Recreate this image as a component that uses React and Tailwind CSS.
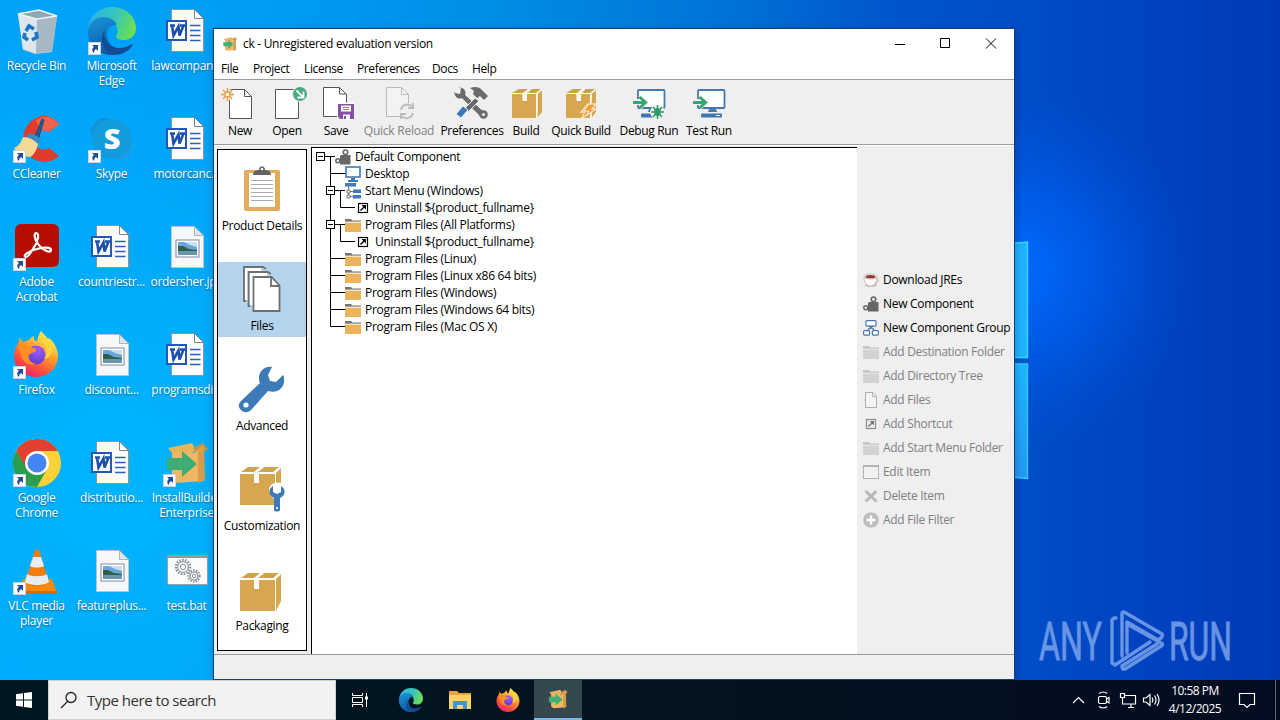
import React from 'react';

/* ---------- shared icons ---------- */

const Shortcut = () => (
  <svg className="absolute left-0 bottom-0" width="13" height="13" viewBox="0 0 13 13">
    <rect x="0.5" y="0.5" width="12" height="12" fill="#fff" stroke="#c9d6e2" />
    <path d="M4 3h6v6L8 7c-1.4 1-2 2-2 4C3.600 9 3.800 6.500 6 5z" fill="#1f4f9c" />
  </svg>
);

const EdgeIcon = ({ size = 48 }) => (
  <svg width={size} height={size} viewBox="0 0 48 48">
    <defs>
      <linearGradient id="edgeTop" x1="0" y1="0.3" x2="1" y2="0.6">
        <stop offset="0" stopColor="#2cb6e4" />
        <stop offset="0.5" stopColor="#35c6bd" />
        <stop offset="1" stopColor="#6fe04b" />
      </linearGradient>
      <linearGradient id="edgeMid" x1="0" y1="0" x2="0.4" y2="1">
        <stop offset="0" stopColor="#1b95dc" />
        <stop offset="1" stopColor="#0c59a4" />
      </linearGradient>
    </defs>
    <path d="M0 23C1 9 11 0 24 0c14 0 24 10 24 21 0 8-6 12-12 12-5 0-9-2-8-4 3-3 2-11-5-15C14 9 4 14 0 23z" fill="url(#edgeTop)" />
    <path d="M0 24c1-9 8-14 15-14 7 0 12 3 14 8-6-1-11 4-10 11 1 9 9 15 17 14-4 3-8 5-13 5C10 48-1 37 0 24z" fill="url(#edgeMid)" />
    <path d="M17 23c-3 10 5 18 15 18 6 0 10-3 12-4 1 0 1 1 0 2-4 6-11 9-19 9-9-3-15-15-8-25z" fill="#124c94" />
  </svg>
);

const FirefoxIcon = ({ size = 46 }) => (
  <svg width={size} height={size} viewBox="0 0 46 46">
    <defs>
      <linearGradient id="ffBody" x1="0.8" y1="0.1" x2="0.3" y2="1">
        <stop offset="0" stopColor="#fff44f" />
        <stop offset="0.4" stopColor="#ff9a2a" />
        <stop offset="0.75" stopColor="#ff4a3e" />
        <stop offset="1" stopColor="#e3237e" />
      </linearGradient>
      <radialGradient id="ffCore" cx="0.6" cy="0.2" r="0.9">
        <stop offset="0" stopColor="#a15cff" />
        <stop offset="1" stopColor="#5a3ac4" />
      </radialGradient>
    </defs>
    <path d="M28 0c2 3 5 5 7 8l1-1c5 4 9 11 9 18 0 12-10 21-22 21S1 37 1 25c0-5 2-10 5-14V7c2 1 3 3 4 4l6-2c2-3 5-4 5-4-1 3 1 5 3 5 1-4 2-7 4-10z" fill="url(#ffBody)" />
    <circle cx="23" cy="24" r="9.500" fill="url(#ffCore)" />
    <path d="M6 11c3 3 8 3 11 5 4 1 7 2 6 4-2 2-5 1-7 4-2 4 2 8 7 9-8 2-15-3-15-10-2-4-3-8-2-12z" fill="#ff8f22" />
    <path d="M28 1c-2 6 1 10 4 14 3 5 1 10-1 13 6-1 8-5 8-9 0-7-9-11-11-18z" fill="#ffd43a" />
  </svg>
);

const BoxArrowIcon = ({ size = 48 }) => (
  <svg width={size} height={size} viewBox="0 0 48 48">
    <path d="M5 9l24-5 4 7-5 4H10z" fill="#e8b45c" />
    <path d="M30 9l10-5 5 6-9 6z" fill="#cc9442" />
    <path d="M9 13l22 1 9-7 1 35-27 2-5-4z" fill="#efb765" />
    <path d="M35 12l6-5 1 34-7 3z" fill="#d79c48" />
    <path d="M4 19h15v-7l15 13-15 13v-7H4z" fill="#3fae74" />
  </svg>
);

/* ---------- desktop icons ---------- */

const RecycleIcon = () => (
  <svg width="48" height="48" viewBox="0 0 48 48">
    <path d="M6 7l21-4 18 6-5 36-17 2-12-4z" fill="#b9cdd8" transform="translate(-1 0)" />
    <path d="M5 7l20 5-2 34-13-4z" fill="#dde7ec" />
    <path d="M24 12l20-3-5 35-16 2z" fill="#a6b8c2" />
    <path d="M5 7l21-4 18 6-20 3z" fill="#8fa6b4" stroke="#eef5f8" strokeWidth="1.500" />
    <g fill="none" stroke="#1976c4" strokeWidth="3.600">
      <path d="M13 24l3-5 5 3" />
      <path d="M23 25l1 5-5 3" />
      <path d="M15 33l-4-3 1-4" />
    </g>
  </svg>
);

const WordIcon = () => (
  <svg width="48" height="48" viewBox="0 0 48 48">
    <path d="M8.500 2.500h23l9 9v33h-32z" fill="#fbfbfb" stroke="#8b939b" />
    <path d="M31.500 2.500v9h9z" fill="#fff" stroke="#7d858c" />
    <path d="M27 18.500h10.500M27 23.500h10.500M27 28.500h10.500M27 33.500h10.500" stroke="#2b62b8" strokeWidth="1.300" />
    <rect x="4" y="14" width="19" height="19" fill="#fff" stroke="#2458b4" strokeWidth="2" />
    <path d="M7 18.500h5M17 18.500h5M9 18.500l1.500 10 5-9 1 9 4-10" stroke="#1d50ad" strokeWidth="2.600" fill="none" />
  </svg>
);

const PictureIcon = () => (
  <svg width="48" height="48" viewBox="0 0 48 48">
    <path d="M8.500 3.500h23l9 9v32h-32z" fill="#f6f7f8" stroke="#b9c4cc" />
    <path d="M31.500 3.500v9h9z" fill="#dfe7ec" stroke="#a9b5be" />
    <rect x="13" y="17" width="23" height="17" fill="#fff" stroke="#7d8a99" />
    <rect x="15" y="19" width="19" height="13" fill="#6aa5dc" />
    <path d="M21 19h13v5l-7-2z" fill="#c8e0f2" />
    <path d="M15 23l5 0 6 3 8 1v1.500H15z" fill="#315f4b" />
    <path d="M15 28h19v4H15z" fill="#6b95ad" />
  </svg>
);

const CCleanerIcon = () => (
  <svg width="48" height="48" viewBox="0 0 48 48">
    <path d="M46 9l-10 8c-7-4-14 0-14 8s7 12 14 8l10 8c-9 9-25 7-32-3C5 24 12 4 29 1c7-1 13 3 17 8z" fill="#df3d2c" />
    <path d="M46 9l-10 8c-3-2-6-2-9-1l-4-11c9-6 18-3 23 4z" fill="#f0624a" />
    <path d="M29 4l2 1-6 20-4-1z" fill="#1f5f97" stroke="#174a78" />
    <path d="M15 19c6-1 10 2 13 7l-5 4c-4-3-8-4-12-5z" fill="#3a8ac4" />
    <path d="M10 22c6 0 11 3 15 7-1 6-5 12-8 13-6 0-13-4-16-9 5-2 7-6 9-11z" fill="#f5d893" />
  </svg>
);

const SkypeIcon = () => (
  <svg width="48" height="48" viewBox="0 0 48 48">
    <circle cx="17" cy="17" r="14" fill="#1590d8" />
    <circle cx="32" cy="32" r="13" fill="#1a9fe6" />
    <circle cx="24" cy="24" r="20" fill="#139cdd" />
    <text x="24" y="34" textAnchor="middle" fontFamily="Open Sans" fontWeight="800" fontSize="29" fill="#fff">S</text>
  </svg>
);

const AcrobatIcon = () => (
  <svg width="48" height="48" viewBox="0 0 48 48">
    <rect x="2" y="1" width="44" height="43" rx="6" fill="#b60c04" />
    <path d="M13 34c-4-1 2-6 11-8 7-2 14-2 14 1 0 4-9 0-13-6-4-5-4-11-2-11 4 0 2 9-3 16-3 5-6 8-7 8z" fill="none" stroke="#fff" strokeWidth="2.200" />
  </svg>
);

const ChromeIcon = () => (
  <svg width="48" height="48" viewBox="0 0 48 48">
    <circle cx="24" cy="24" r="24" fill="#fdd13a" />
    <path d="M3.200 12A24 24 0 0 1 44.800 12H24L13 30z" fill="#e4402f" />
    <path d="M3.200 12A24 24 0 0 0 24 48l10-18H14z" fill="#2c9e4b" />
    <circle cx="24" cy="24" r="12" fill="#fff" />
    <circle cx="24" cy="24" r="9.500" fill="#4285f4" />
  </svg>
);

const VlcIcon = () => (
  <svg width="48" height="48" viewBox="0 0 48 48">
    <path d="M10 32h29l5 14H6z" fill="#f58a10" />
    <path d="M6 44h38v3H6z" fill="#d96b06" />
    <path d="M22 3c1-1 3-1 4 0l10 33c-3 5-21 5-24 0z" fill="#f57c0c" />
    <path d="M20 10h8l3 9c-3 2-11 2-14 0z" fill="#e9edf0" />
    <path d="M14 27c4 3 16 3 20 0l2 8c-4 4-20 4-24 0z" fill="#e9edf0" />
  </svg>
);

const BatIcon = () => (
  <svg width="48" height="48" viewBox="0 0 48 48">
    <rect x="4.500" y="8.500" width="40" height="29" fill="#fafbfb" stroke="#8fa3b0" />
    <rect x="4" y="8" width="41" height="3" fill="#8f9ba4" />
    <g fill="none" stroke="#8c9298">
      <circle cx="20" cy="20" r="7" strokeWidth="2.500" strokeDasharray="1.600 1.300" />
      <circle cx="20" cy="20" r="5.300" />
      <circle cx="20" cy="20" r="2.700" />
      <circle cx="31" cy="29" r="5.500" strokeWidth="2.300" strokeDasharray="1.500 1.200" />
      <circle cx="31" cy="29" r="4" />
      <circle cx="31" cy="29" r="1.800" />
    </g>
  </svg>
);

const desktopItems = [
  { icon: RecycleIcon, lines: ['Recycle Bin'] },
  { icon: CCleanerIcon, lines: ['CCleaner'], shortcut: true },
  { icon: AcrobatIcon, lines: ['Adobe', 'Acrobat'], shortcut: true },
  { icon: FirefoxIcon, lines: ['Firefox'], shortcut: true },
  { icon: ChromeIcon, lines: ['Google', 'Chrome'], shortcut: true },
  { icon: VlcIcon, lines: ['VLC media', 'player'], shortcut: true },
  { icon: EdgeIcon, lines: ['Microsoft', 'Edge'], shortcut: true },
  { icon: SkypeIcon, lines: ['Skype'], shortcut: true },
  { icon: WordIcon, lines: ['countriestr...'] },
  { icon: PictureIcon, lines: ['discount...'] },
  { icon: WordIcon, lines: ['distributio...'] },
  { icon: PictureIcon, lines: ['featureplus...'] },
  { icon: WordIcon, lines: ['lawcompan...'] },
  { icon: WordIcon, lines: ['motorcanc...'] },
  { icon: PictureIcon, lines: ['ordersher.jpg'] },
  { icon: WordIcon, lines: ['programsdi...'] },
  { icon: BoxArrowIcon, lines: ['InstallBuilder', 'Enterprise'], shortcut: true },
  { icon: BatIcon, lines: ['test.bat'] },
];

const DesktopItem = ({ icon: Icon, lines, shortcut }) => (
  <div className="flex flex-col items-center pt-[7px]">
    <div className="relative w-12 h-12">
      <Icon />
      {shortcut && <Shortcut />}
    </div>
    <div className="mt-[3px] text-center text-[12px] leading-[15px] tracking-[-0.3px] text-white whitespace-nowrap [text-shadow:0_1px_2px_rgba(0,0,0,0.45)]">
      {lines.map((line) => (
        <div key={line}>{line}</div>
      ))}
    </div>
  </div>
);

/* ---------- toolbar icons ---------- */

const ToolSvg = ({ children }) => (
  <svg width="48" height="36" viewBox="0 0 48 36" fill="none">{children}</svg>
);

const NewIcon = () => (
  <ToolSvg>
    <path d="M13.500 4.500h15l7 7v22h-22z" fill="#fff" stroke="#555" />
    <path d="M28.500 4.500v7h7" stroke="#555" />
    <circle cx="11.500" cy="9.500" r="6" fill="#efefef" />
    <path d="M11.500 3v13M5 9.500h13M7 5l9 9M16 5l-9 9" stroke="#ee9c42" strokeWidth="1.400" />
    <circle cx="11.500" cy="9.500" r="2.500" fill="#fff" stroke="#ee9c42" strokeWidth="1.300" />
  </ToolSvg>
);

const OpenIcon = () => (
  <ToolSvg>
    <path d="M12.500 4.500h23v29h-23z" fill="#fff" stroke="#555" />
    <circle cx="37" cy="9" r="8" fill="#efefef" />
    <circle cx="37" cy="9" r="7" fill="#46ab7d" />
    <path d="M33.500 5.500l6 6M40.500 6.500v6h-6" stroke="#fff" strokeWidth="1.800" />
  </ToolSvg>
);

const SaveIcon = () => (
  <ToolSvg>
    <path d="M11.500 2.500h16l7 7v22h-23z" fill="#fff" stroke="#555" />
    <path d="M27.500 2.500v6.500h7" stroke="#555" />
    <path d="M25 17.500h17v17H25z" fill="#fff" />
    <path d="M26 19h16v15H28l-2-2z" fill="#8650a6" />
    <path d="M29 20.500h10v6H29zM31 29.500h7V34h-7z" fill="#fff" />
    <path d="M31 22.500h6M31 24.500h6" stroke="#8650a6" strokeWidth="0.800" />
    <path d="M32 31h2v3h-2z" fill="#8650a6" />
  </ToolSvg>
);

const ReloadIcon = () => (
  <ToolSvg>
    <path d="M11.500 2.500h15l7 7v22h-22z" fill="#f3f3f3" stroke="#b9b9b9" />
    <path d="M26.500 2.500v7h7" stroke="#b9b9b9" />
    <circle cx="32" cy="26" r="8" fill="#efefef" />
    <path d="M26 25c1-6 8-7 11-3M38 18v5h-5M38 28c-1 5-8 7-11 3M26 34v-5h5" stroke="#bcbcbc" strokeWidth="2" />
  </ToolSvg>
);

const PrefsIcon = () => (
  <ToolSvg>
    <path d="M8 7l3-3 4 2 1 3 22 20-4 4-21-21-3 0z" fill="#6b6b6b" />
    <circle cx="12" cy="8" r="5.500" fill="#6b6b6b" />
    <path d="M7 2l6 1-1 6-5-1z" fill="#efefef" />
    <circle cx="35.500" cy="29.500" r="4.300" fill="#6b6b6b" />
    <circle cx="35.500" cy="29.500" r="1.600" fill="#efefef" />
    <path d="M27 13l4 3-11 11-4-3z" fill="#6b6b6b" stroke="#efefef" />
    <path d="M22 3c5-2 9-1 11 1l7 7-4 4-4-4-3 2-4-4 1-3z" fill="#6b6b6b" />
    <path d="M15 21l5 4-7 8-5-4z" fill="#3d78b8" stroke="#efefef" />
  </ToolSvg>
);

const Box = () => (
  <g>
    <path d="M10 9h24v24H10z" fill="#d6a74e" />
    <path d="M10 8l7-4h9l-5 4zM25 8l4-4h10l-5 4z" fill="#caa347" />
    <path d="M35.500 9l4.500-4v22l-4.500 6z" fill="#d6a74e" />
    <path d="M20.500 8h4.500v8h-4.500z" fill="#fff" />
    <path d="M21 8.500l6-4.500M25 8.500l4-4.500M10 8.500h25M35 9v24M35 8.500l5-4" stroke="#fff" fill="none" />
  </g>
);

const BuildIcon = () => (
  <ToolSvg>
    <Box />
  </ToolSvg>
);

const QuickBuildIcon = () => (
  <ToolSvg>
    <g transform="translate(-1 0)">
      <Box />
      <path d="M32 19l8 0-4 5h4L25 34l4-7h-4z" fill="#f29a3c" stroke="#f5e3c4" strokeWidth="1.300" />
      <path d="M32 20l-4 6h5l-3 5" stroke="#fff" strokeWidth="0.800" />
    </g>
  </ToolSvg>
);

const RunBase = () => (
  <g>
    <rect x="13" y="5" width="26.500" height="18" rx="1" fill="#fff" stroke="#4a78ae" strokeWidth="1.800" />
    <path d="M24 24h7l1 3h-9z" fill="#4a78ae" />
    <rect x="16" y="28.500" width="21" height="4" rx="1" fill="#3f74b3" />
    <path d="M31 30.500h4" stroke="#fff" />
    <path d="M6 14h9v-4l9 7.500-9 7.500v-5H6z" fill="#efefef" />
    <path d="M14 12v-1l6 6-3 6h-3z" fill="#fff" />
    <path d="M8 17.500h11M14.500 12l6 5.500-6 5.500" stroke="#3aa573" strokeWidth="3" />
  </g>
);

const DebugIcon = () => (
  <ToolSvg>
    <RunBase />
    <ellipse cx="32.500" cy="27" rx="7.500" ry="7" fill="#efefef" />
    <path d="M26 27h13M28 22l9 10M37 22l-9 10M32.500 20v14" stroke="#2f9a67" strokeWidth="1.500" />
    <ellipse cx="32.500" cy="27" rx="3.300" ry="4" fill="#2f9a67" />
  </ToolSvg>
);

const TestIcon = () => (
  <ToolSvg>
    <RunBase />
  </ToolSvg>
);

const tools = [
  { label: 'New', icon: NewIcon, width: 'w-[46px]' },
  { label: 'Open', icon: OpenIcon, width: 'w-[48px]' },
  { label: 'Save', icon: SaveIcon, width: 'w-[50px]' },
  { label: 'Quick Reload', icon: ReloadIcon, width: 'w-[76px]', disabled: true },
  { label: 'Preferences', icon: PrefsIcon, width: 'w-[70px]' },
  { label: 'Build', icon: BuildIcon, width: 'w-[38px]' },
  { label: 'Quick Build', icon: QuickBuildIcon, width: 'w-[72px]' },
  { label: 'Debug Run', icon: DebugIcon, width: 'w-[64px]' },
  { label: 'Test Run', icon: TestIcon, width: 'w-[56px]' },
];

/* ---------- sidebar icons ---------- */

const ClipboardIcon = () => (
  <svg width="48" height="48" viewBox="0 0 48 48">
    <rect x="6" y="5" width="36" height="41" rx="2" fill="#e2ac5a" />
    <path d="M11 8h26v34H11z" fill="#fff" />
    <path d="M13 15.500h22M13 19.500h22M13 23.500h22M13 27.500h22M13 31.500h22M13 35.500h22" stroke="#a9a9b4" />
    <path d="M15 10c0-4 3-5 6-5 0-5 6-5 6 0 3 0 6 1 6 5z" fill="#636363" />
    <circle cx="24" cy="4" r="1.300" fill="#fff" />
  </svg>
);

const FilesIcon = () => (
  <svg width="48" height="48" viewBox="0 0 48 48" fill="none" stroke="#6f6f6f" strokeWidth="1.800">
    <path d="M7 3h16v3H10v29H7zM12 8h17v3H15v29h-3z" fill="#fff" stroke="none" />
    <path d="M8 36H6V2h19l3 2M12 41h-1.500V7H30l3 2" />
    <path d="M15.500 12h18l8 8.500V46h-26z" fill="#fff" />
    <path d="M33 12v9h8.500" />
  </svg>
);

const WrenchIcon = () => (
  <svg width="48" height="48" viewBox="0 0 48 48">
    <path d="M34 2c-7-1-13 4-13 11 0 2 0 3 1 5L3 36c-3 3-3 6 0 9 3 3 7 3 10 0l17-19c9 3 17-3 16-12 0-2 0-3-1-4l-7 7-6-1-2-6z" fill="#3d7ab8" />
    <circle cx="8" cy="40" r="2.600" fill="#fff" />
  </svg>
);

const BigBox = () => (
  <g>
    <path d="M3 9h35v31H3z" fill="#d6a74e" />
    <path d="M4 7l7-5h12l-6 5zM20 7l7-5h15l-6 5z" fill="#cfa34c" />
    <path d="M39 8l5-5v27l-5 10z" fill="#d6a74e" />
    <path d="M17 7h5v11h-5z" fill="#fff" />
    <path d="M18 8l8-6" stroke="#fff" strokeWidth="2" />
  </g>
);

const CustomizeIcon = () => (
  <svg width="48" height="48" viewBox="0 0 48 48">
    <g transform="translate(-1 0)">
      <BigBox />
      <path d="M32 24a8.500 8.500 0 1 1 13 9v14h-8V34c-3-2-5-6-5-10z" fill="#fff" />
      <path d="M37 21c-5 3-5 9 1 12v12c0 2 6 2 6 0V33c6-3 6-9 1-12v6l-4 2-4-2z" transform="translate(-1 0)" fill="#3d7ab8" />
      <circle cx="40" cy="43" r="1.100" fill="#fff" />
    </g>
  </svg>
);

const PackageIcon = () => (
  <svg width="48" height="48" viewBox="0 0 48 48">
    <g transform="translate(-1 6)">
      <BigBox />
    </g>
  </svg>
);

const sections = [
  { label: 'Product Details', icon: ClipboardIcon },
  { label: 'Files', icon: FilesIcon, selected: true },
  { label: 'Advanced', icon: WrenchIcon },
  { label: 'Customization', icon: CustomizeIcon },
  { label: 'Packaging', icon: PackageIcon },
];

/* ---------- 16px icons for the tree and the action list ---------- */

const Small = ({ children }) => (
  <svg className="shrink-0" width="16" height="16" viewBox="0 0 16 16" fill="none">{children}</svg>
);

const ComponentIcon = () => (
  <Small>
    <path d="M6 6h9.500v9.500H5V7z" fill="#666" />
    <circle cx="10.500" cy="3.300" r="2.300" stroke="#666" strokeWidth="1.600" />
    <circle cx="2.800" cy="11.800" r="2" fill="#efefef" stroke="#666" strokeWidth="1.500" />
  </Small>
);

const MonitorIcon = () => (
  <Small>
    <rect x="1" y="1" width="14" height="10" fill="#fff" stroke="#3d7ab8" strokeWidth="1.600" />
    <path d="M6 12h4v2H6zM3 14h10v2H3z" fill="#3d7ab8" />
  </Small>
);

const StartMenuIcon = () => (
  <Small>
    <path d="M0 0h11v3.500H0zM8 6.500h8V10H8zM8 12h8v3.500H8z" fill="#3d7ab8" />
    <path d="M3.500 3v10M4 8.500h4M4 13.500h4" stroke="#777" />
    <path d="M2 7h3v3H2zM2 12h3v3H2z" fill="#fff" stroke="#777" />
  </Small>
);

const FolderIcon = ({ disabled }) => (
  <Small>
    <path d="M0 2h6l1.500 1.500H16V5H0z" fill={disabled ? '#c2c2c2' : '#757575'} />
    <path d="M0 5.500h16V15H0z" fill={disabled ? '#d2d2d2' : '#ebb45c'} />
    <path d="M0 5h16" stroke={disabled ? '#e4e4e4' : '#fff4dc'} strokeWidth="0.800" />
  </Small>
);

const LinkIcon = ({ disabled }) => (
  <Small>
    <rect x="3.500" y="3.500" width="9" height="9" fill={disabled ? '#efefef' : '#fff'} stroke={disabled ? '#8a8a8a' : '#000'} strokeWidth="1.200" />
    <path d="M5.500 10.500l4-4" stroke={disabled ? '#777' : '#000'} strokeWidth="1.400" />
    <path d="M6.500 5H11v4.500z" fill={disabled ? '#777' : '#000'} />
  </Small>
);

const CoffeeIcon = () => (
  <Small>
    <ellipse cx="8" cy="13" rx="6" ry="1.800" fill="#ccb9b0" />
    <path d="M1 5c0 6 3 9 6.500 9S14 11 14 5z" fill="#fbf9f7" stroke="#b9aaa2" strokeWidth="0.700" />
    <path d="M13 7c3-1 3 4-1 4" stroke="#b9aaa2" />
    <ellipse cx="7.500" cy="4.500" rx="6.500" ry="2.500" fill="#fff" stroke="#b9aaa2" strokeWidth="0.700" />
    <ellipse cx="7.500" cy="4.700" rx="5" ry="1.600" fill="#8d3a2c" />
  </Small>
);

const GroupIcon = () => (
  <Small>
    <rect x="3" y="0.700" width="10" height="5.500" rx="1" fill="#fff" stroke="#4a78ae" strokeWidth="1.200" />
    <path d="M8 6v2M4 10.500L8 8l4 2.500M6 6l5 3M10 6L5 9" stroke="#4a78ae" />
    <rect x="0.600" y="10.600" width="6" height="4.500" rx="1" fill="#fff" stroke="#4a78ae" strokeWidth="1.200" />
    <rect x="9.400" y="10.600" width="6" height="4.500" rx="1" fill="#fff" stroke="#4a78ae" strokeWidth="1.200" />
  </Small>
);

const PageIcon = () => (
  <Small>
    <path d="M2.500 0.500h7.500l3.500 3.500v11.500h-11z" fill="#f4f4f4" stroke="#b0b0b0" />
    <path d="M9.500 0.500v4h4" stroke="#b0b0b0" />
  </Small>
);

const EditIcon = () => (
  <Small>
    <rect x="0.500" y="1.500" width="15" height="13" fill="#f1f1f1" stroke="#b3b3b3" />
    <path d="M0 2h16" stroke="#b3b3b3" strokeWidth="2" />
  </Small>
);

const DeleteIcon = () => (
  <Small>
    <path d="M2.500 3l11 10.500M13.500 3l-11 10.500" stroke="#b9b9b9" strokeWidth="3" />
  </Small>
);

const AddIcon = () => (
  <Small>
    <circle cx="8" cy="8" r="7.800" fill="#bdbdbd" />
    <path d="M8 3.500v9M3.500 8h9" stroke="#fff" strokeWidth="2.400" />
  </Small>
);

const actions = [
  { label: 'Download JREs', icon: CoffeeIcon },
  { label: 'New Component', icon: ComponentIcon },
  { label: 'New Component Group', icon: GroupIcon },
  { label: 'Add Destination Folder', icon: FolderIcon, disabled: true },
  { label: 'Add Directory Tree', icon: FolderIcon, disabled: true },
  { label: 'Add Files', icon: PageIcon, disabled: true },
  { label: 'Add Shortcut', icon: LinkIcon, disabled: true },
  { label: 'Add Start Menu Folder', icon: FolderIcon, disabled: true },
  { label: 'Edit Item', icon: EditIcon, disabled: true },
  { label: 'Delete Item', icon: DeleteIcon, disabled: true },
  { label: 'Add File Filter', icon: AddIcon, disabled: true },
];

/* ---------- file tree ---------- */

const tree = [
  { label: 'Default Component', level: 0, open: true, icon: ComponentIcon },
  { label: 'Desktop', level: 1, icon: MonitorIcon },
  { label: 'Start Menu (Windows)', level: 1, open: true, icon: StartMenuIcon },
  { label: 'Uninstall ${product_fullname}', level: 2, icon: LinkIcon },
  { label: 'Program Files (All Platforms)', level: 1, open: true, icon: FolderIcon },
  { label: 'Uninstall ${product_fullname}', level: 2, icon: LinkIcon },
  { label: 'Program Files (Linux)', level: 1, icon: FolderIcon },
  { label: 'Program Files (Linux x86 64 bits)', level: 1, icon: FolderIcon },
  { label: 'Program Files (Windows)', level: 1, icon: FolderIcon },
  { label: 'Program Files (Windows 64 bits)', level: 1, icon: FolderIcon },
  { label: 'Program Files (Mac OS X)', level: 1, icon: FolderIcon, last: true },
];

const branchWidth = [23, 33, 43];

const Branch = ({ level, open, last }) => (
  <svg className="shrink-0" width={branchWidth[level]} height="17" viewBox={`0 0 ${branchWidth[level]} 17`} fill="none" stroke="#000">
    {level === 0 && <path d="M8 8.500h16M18.500 8.500V17" />}
    {level === 1 && <path d={last ? 'M18.500 0v8.500H33' : 'M18.500 0v17M18.500 8.500H33'} />}
    {level === 1 && open && <path d="M28.500 8.500V17" />}
    {level === 2 && <path d="M18.500 0v17M28.500 0v8.500H43" />}
    {open && (
      <g transform={level === 0 ? 'translate(4 4)' : 'translate(14 4)'}>
        <rect x="0.500" y="0.500" width="8" height="8" fill="#fff" />
        <path d="M2 4.500h5" />
      </g>
    )}
  </svg>
);

const TreeRow = ({ label, level, open, last, icon: Icon }) => (
  <div className="flex items-center h-[17px]">
    <Branch level={level} open={open} last={last} />
    <Icon />
    <span className="ml-[4px] leading-[17px]">{label}</span>
  </div>
);

const menus = [
  { label: 'File', width: 'w-[32px]' },
  { label: 'Project', width: 'w-[51px]' },
  { label: 'License', width: 'w-[53px]' },
  { label: 'Preferences', width: 'w-[75px]' },
  { label: 'Docs', width: 'w-[40px]' },
  { label: 'Help', width: 'w-[40px]' },
];

const InstallBuilderWindow = () => (
  <div className="absolute left-[213px] top-[28px] w-[802px] h-[652px] flex flex-col bg-[#efefef] border border-[#123f7c] text-black text-[12px] whitespace-nowrap shadow-[0_2px_8px_rgba(0,0,0,0.25)]">
    <div className="h-[30px] shrink-0 bg-white flex items-center pl-[8px]">
      <BoxArrowIcon size={16} />
      <span className="ml-[5px] tracking-[-0.3px]">ck - Unregistered evaluation version</span>
      <svg className="ml-auto" width="138" height="30" viewBox="0 0 138 30" fill="none" stroke="#000">
        <path d="M19 15.500h10M64.500 9.500h9v9h-9zM110 9.500l10 10M120 9.500l-10 10" />
      </svg>
    </div>
    <div className="h-[20px] shrink-0 bg-white flex items-center pl-[7px] tracking-[-0.38px]">
      {menus.map((m) => (
        <span key={m.label} className={m.width}>{m.label}</span>
      ))}
    </div>

    <div className="h-[66px] shrink-0 flex pl-[3px] border-y border-[#9c9c9c] tracking-[-0.35px]">
      {tools.map(({ label, icon: Icon, width, disabled }) => (
        <div key={label} className={`${width} flex flex-col items-center pt-[5px]`}>
          <div className="w-12 shrink-0">
            <Icon />
          </div>
          <span className={disabled ? 'mt-px leading-[18px] tracking-[-0.25px] text-[#828282]' : 'mt-px leading-[18px]'}>{label}</span>
        </div>
      ))}
    </div>

    <div className="flex h-[509px] shrink-0 border-t border-white">
      <div className="ml-[3px] mt-[3px] w-[90px] h-[502px] shrink-0 bg-white border border-black pt-[12px] tracking-[-0.32px]">
        {sections.map(({ label, icon: Icon, selected }) => (
          <div key={label} className="h-[100px]">
            <div className={`h-[75px] flex flex-col items-center pt-[3px] ${selected ? 'bg-[#b4d3ed]' : ''}`}>
              <Icon />
              <span className="mt-[4px] leading-[17px]">{label}</span>
            </div>
          </div>
        ))}
      </div>
      <div className="ml-[4px] mt-px w-[546px] shrink-0 bg-white border-l border-t border-black tracking-[-0.28px]">
        {tree.map((row, i) => (
          <TreeRow key={i} {...row} />
        ))}
      </div>
      <div className="flex-1 pl-[6px] pt-[122px] tracking-[-0.3px]">
        {actions.map(({ label, icon: Icon, disabled }) => (
          <div key={label} className="h-6 flex items-center">
            <Icon disabled={disabled} />
            <span className={disabled ? 'ml-[4px] text-[#808080]' : 'ml-[4px]'}>{label}</span>
          </div>
        ))}
      </div>
    </div>
    <div className="flex-1 border-t border-[#9c9c9c]" />
  </div>
);

/* ---------- wallpaper ---------- */

const Wallpaper = () => (
  <svg className="absolute inset-0" width="1280" height="680" viewBox="0 0 1280 680">
    <defs>
      <linearGradient id="sky" x1="0" y1="0" x2="1" y2="0">
        <stop offset="0" stopColor="#00a4fa" />
        <stop offset="0.2" stopColor="#009df5" />
        <stop offset="0.4" stopColor="#008ce6" />
        <stop offset="0.56" stopColor="#0074d8" />
        <stop offset="0.7" stopColor="#0055cc" />
        <stop offset="0.8" stopColor="#004dc8" />
        <stop offset="0.9" stopColor="#0042c0" />
        <stop offset="1" stopColor="#003ab6" />
      </linearGradient>
      <radialGradient id="leftGlow" gradientUnits="userSpaceOnUse" cx="120" cy="480" r="480">
        <stop offset="0" stopColor="#00b4ff" />
        <stop offset="1" stopColor="#00b4ff" stopOpacity="0" />
      </radialGradient>
      <radialGradient id="rightGlow" gradientUnits="userSpaceOnUse" cx="1015" cy="270" r="180">
        <stop offset="0" stopColor="#006bff" />
        <stop offset="0.4" stopColor="#0062f4" stopOpacity="0.7" />
        <stop offset="1" stopColor="#0055dd" stopOpacity="0" />
      </radialGradient>
      <linearGradient id="pane" x1="0" y1="0" x2="0" y2="1">
        <stop offset="0" stopColor="#1eb5ff" />
        <stop offset="1" stopColor="#2496f6" />
      </linearGradient>
    </defs>
    <rect width="1280" height="680" fill="url(#sky)" />
    <rect width="600" height="680" fill="url(#leftGlow)" />
    <rect x="830" y="80" width="370" height="380" fill="url(#rightGlow)" />
    <path d="M1010 243.500l17.500-1.500v115.500H1010z" fill="#1fb2ff" stroke="#35d5ff" strokeWidth="1.500" />
    <path d="M1010 364h17.500v114.500L1010 477z" fill="url(#pane)" stroke="#2fc8ff" strokeWidth="1.500" />
    <path d="M1010 359h18v3.500h-18z" fill="#0055cc" />
  </svg>
);

const AnyRunLogo = () => (
  <svg className="absolute left-[1034px] top-[606px] overflow-visible" width="202" height="70" viewBox="0 0 202 70">
    <g fill="#7ba3ea" stroke="#7ba3ea" strokeWidth="0.900" opacity="0.850" fontFamily="Roboto" fontSize="53">
      <text x="5" y="53.500" textLength="63" lengthAdjust="spacingAndGlyphs">ANY</text>
      <text x="135" y="53.500" textLength="63" lengthAdjust="spacingAndGlyphs">RUN</text>
    </g>
    <g fill="none" stroke="#7ba3ea" opacity="0.850" strokeWidth="3.400" strokeLinejoin="round" strokeLinecap="round">
      <path d="M82 12h-2l-2 2v43l3 2 35-23" />
      <path d="M88 50V8q0-3 3-1.500L128 28q1 2-1 4l-3 2-31-18v31" />
      <path d="M93 18l35 19.500q1 1 0 2L91 63q-3 1-3-3l35-22" />
    </g>
  </svg>
);

/* ---------- taskbar ---------- */

const Taskbar = () => (
  <div className="absolute left-0 bottom-0 w-full h-10 flex items-stretch bg-linear-to-r from-[#00171f] via-[#04131f] to-[#020c20] text-white">
    <div className="w-12 flex items-center justify-center">
      <svg width="16" height="16" viewBox="0 0 16 16" fill="#fff">
        <path d="M0 2.300l7-1v6.200H0zM8 1.100L16 0v7.500H8zM0 8.500h7v6.200l-7-1zM8 8.500h8V16l-8-1.100z" />
      </svg>
    </div>
    <div className="w-[288px] flex items-center bg-[#f2f2f2] border border-[#d0d0d0] text-[#333] pl-[11px]">
      <svg width="18" height="18" viewBox="0 0 18 18" fill="none" stroke="#222" strokeWidth="1.300">
        <circle cx="11" cy="6.500" r="5" />
        <path d="M7.500 10.500L1 17" />
      </svg>
      <span className="ml-[9px] text-[15px] tracking-[-0.48px]">Type here to search</span>
    </div>
    <div className="w-12 flex items-center justify-center">
      <svg width="18" height="16" viewBox="0 0 18 16" fill="none" stroke="#fff">
        <path d="M1.500 1V3.500h10V1M1.500 15v-2.500h10V15M1.500 5.500h10v5h-10zM15.500 1v14" />
        <path d="M14 4.500h3v3h-3z" fill="#fff" stroke="none" />
      </svg>
    </div>
    <div className="w-[54px] flex items-center justify-center">
      <EdgeIcon size={24} />
    </div>
    <div className="w-[44px] flex items-center justify-center">
      <svg width="22" height="20" viewBox="0 0 22 20">
        <path d="M0 1h8l2 2h12v4H0z" fill="#e8a33c" />
        <path d="M0 5h22v14H0z" fill="#fbd563" />
        <path d="M4 11h14v8h-4v-4H8v4H4z" fill="#3f93d8" />
      </svg>
    </div>
    <div className="w-[52px] flex items-center justify-center">
      <FirefoxIcon size={24} />
    </div>
    <div className="w-12 flex items-center justify-center bg-[#35474f] border-b-2 border-[#76b9ed]">
      <BoxArrowIcon size={22} />
    </div>

    <div className="ml-auto flex items-center">
      <svg width="90" height="20" viewBox="0 0 90 20" fill="none" stroke="#fff" strokeWidth="1.200">
        <path d="M2 13l5.500-5.500L13 13" />
        <rect x="27.500" y="6.500" width="8" height="7" rx="1.500" />
        <path d="M35.500 9l2.500-1.500v5.500L35.500 11.500M28 3.500c2.500-2 6-2 8 0M28 16.500c2.500 2 6 2 8 0" />
        <path d="M53 5.500h11.500v8.500h-10M57 17.500h6M60 14v3.500M49.500 3.500h4v4h-4zM51.500 7.500V14h3" />
        <path d="M72.500 8h2.500l4-3.500v11L75 12h-2.500zM81 7.500c1 1.500 1 3.500 0 5M83.500 5.500c2 3 2 6 0 9M86 4c2.700 4 2.700 8 0 12" />
      </svg>
      <div className="w-[68px] text-center text-[12px] leading-[18px] tracking-[-0.5px] whitespace-nowrap">
        <div>10:58 PM</div>
        <div>4/12/2025</div>
      </div>
      <svg className="ml-[9px]" width="18" height="18" viewBox="0 0 18 18" fill="none" stroke="#fff" strokeWidth="1.200">
        <path d="M1.500 2.500h15v11h-4.500L9 16.500l-3-3H1.500z" />
      </svg>
      <div className="ml-[19px] w-[5px] h-10 border-l border-[#5b6675]" />
    </div>
  </div>
);

const App = () => (
  <div className="relative w-[1280px] h-[720px] overflow-hidden bg-[#0078d7] font-['Open_Sans',sans-serif]">
    <Wallpaper />
    <div className="relative -ml-px w-[225px] h-[648px] grid grid-flow-col grid-cols-[75px_75px_75px] grid-rows-[repeat(6,108px)]">
      {desktopItems.map((item) => (
        <DesktopItem key={item.lines[0]} {...item} />
      ))}
    </div>
    <AnyRunLogo />
    <InstallBuilderWindow />
    <Taskbar />
  </div>
);

export default App;
